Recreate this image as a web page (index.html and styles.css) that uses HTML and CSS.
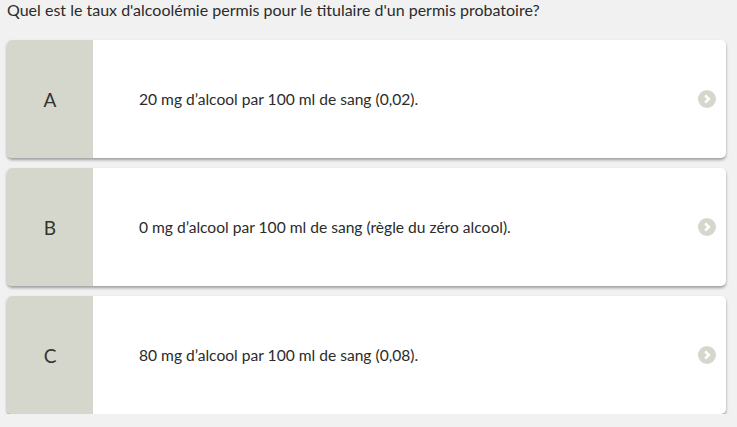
FILE: index.html
```html
<!DOCTYPE html>
<html lang="fr">
<head>
    <meta charset="UTF-8">
    <title>Question</title>
    <link rel="stylesheet" href="styles.css">
</head>
<body>
    <div class="quiz">
        <p class="question">Quel est le taux d'alcoolémie permis pour le titulaire d'un permis probatoire?</p>
        <div class="answers">
            <div class="answer">
                <div class="answer-letter">A</div>
                <div class="answer-text">20 mg d’alcool par 100 ml de sang (0,02).</div>
                <span class="answer-arrow">
                    <svg width="18" height="18" viewBox="0 0 18 18"><circle cx="9" cy="9" r="9" fill="#d5d7cd"/><path d="M7.2 5.4 L10.8 9 L7.2 12.6" fill="none" stroke="#fff" stroke-width="2.6"/></svg>
                </span>
            </div>
            <div class="answer">
                <div class="answer-letter">B</div>
                <div class="answer-text">0 mg d’alcool par 100 ml de sang (règle du zéro alcool).</div>
                <span class="answer-arrow">
                    <svg width="18" height="18" viewBox="0 0 18 18"><circle cx="9" cy="9" r="9" fill="#d5d7cd"/><path d="M7.2 5.4 L10.8 9 L7.2 12.6" fill="none" stroke="#fff" stroke-width="2.6"/></svg>
                </span>
            </div>
            <div class="answer">
                <div class="answer-letter">C</div>
                <div class="answer-text">80 mg d’alcool par 100 ml de sang (0,08).</div>
                <span class="answer-arrow">
                    <svg width="18" height="18" viewBox="0 0 18 18"><circle cx="9" cy="9" r="9" fill="#d5d7cd"/><path d="M7.2 5.4 L10.8 9 L7.2 12.6" fill="none" stroke="#fff" stroke-width="2.6"/></svg>
                </span>
            </div>
        </div>
    </div>
</body>
</html>
```

FILE: styles.css
```css
/* Base */
body, html {
    margin: 0;
    padding: 0;
    background-color: #f1f1f1;
    font-family: 'Lato', 'Liberation Sans', sans-serif;
    color: #2b2b2b;
}

.quiz {
    padding: 0 11px 0 7px;
}

.question {
    margin: 0 0 21px;
    font-size: 16px;
    line-height: 19px;
}

/* Answer cards */
.answers {
    display: flex;
    flex-direction: column;
    gap: 10px;
}

.answer {
    display: flex;
    align-items: center;
    height: 118px;
    background-color: white;
    border-radius: 5px;
    overflow: hidden;
    box-shadow: 0 2px 3px rgba(0,0,0,0.35);
    cursor: pointer;
}

.answer-letter {
    width: 86px;
    align-self: stretch;
    display: flex;
    align-items: center;
    justify-content: center;
    background-color: #d5d7cd;
    font-size: 19px;
    color: #333;
}

.answer-text {
    flex: 1;
    padding-left: 46px;
    font-size: 15.6px;
}

.answer-arrow {
    display: flex;
    margin-right: 10px;
}
```
